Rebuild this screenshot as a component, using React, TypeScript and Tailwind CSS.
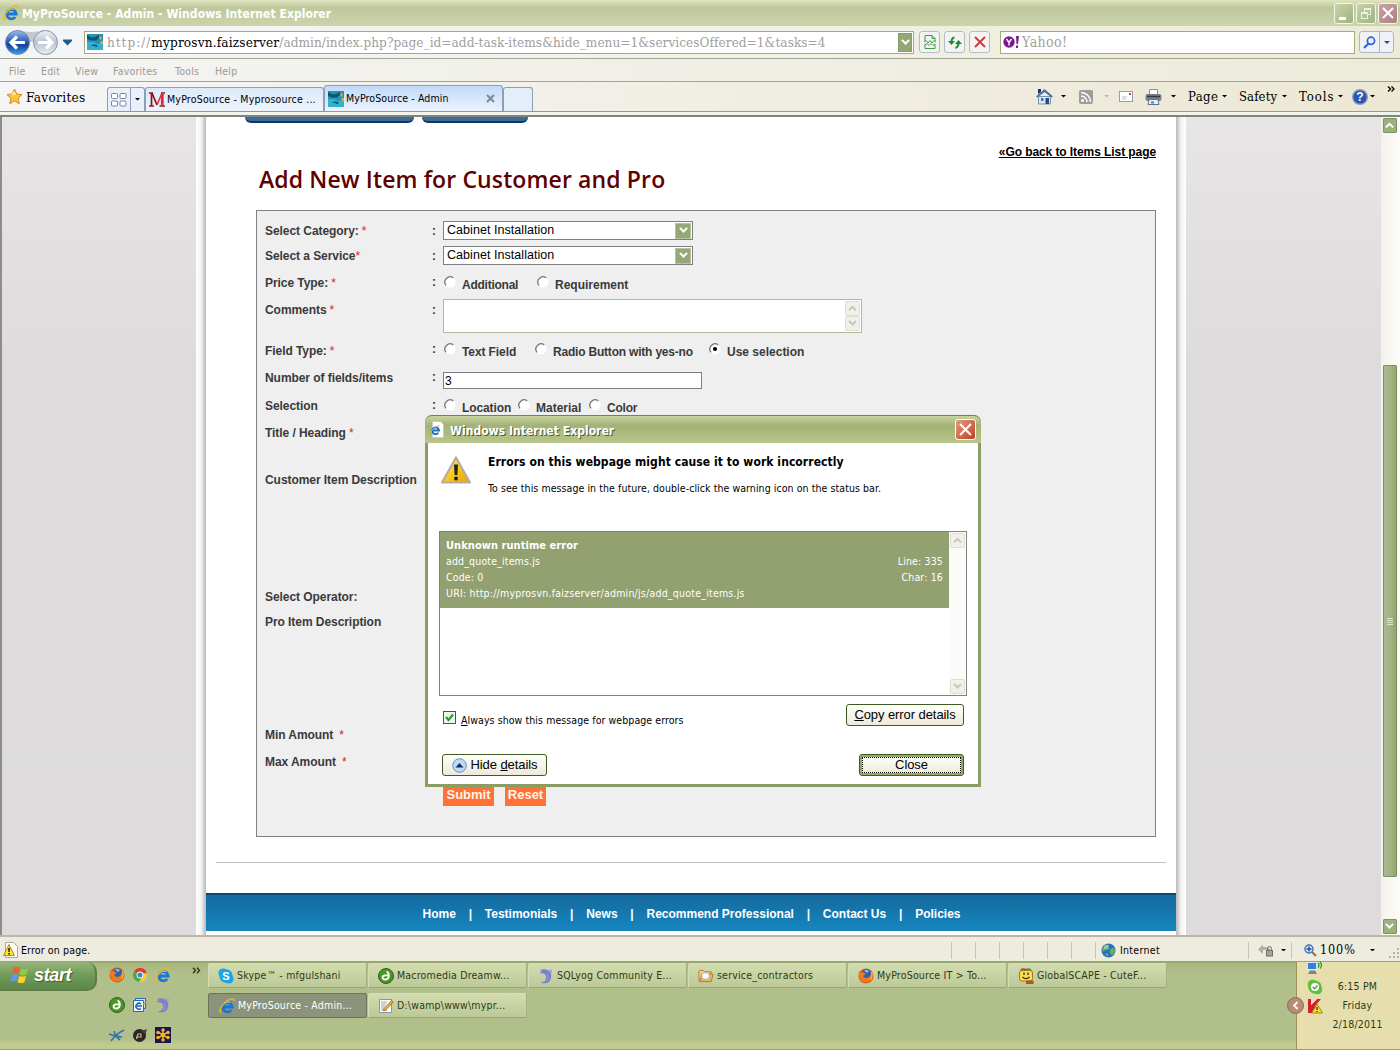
import React from "react";

const TAHOMA = "font-['DejaVu_Sans_Condensed','DejaVu_Sans',sans-serif]";
const SLAB = "font-['DejaVu_Serif_Condensed','DejaVu_Serif',serif]";
const ARIAL = "font-['Liberation_Sans',Arial,sans-serif]";
const TREB = "font-['Open_Sans','Noto_Sans',sans-serif]";

type P = { className?: string; size?: number };

/* ---------- icons ---------- */

function IE({ className = "", size = 16 }: P) {
  return (
    <svg className={`shrink-0 ${className}`} width={size} height={size} viewBox="0 0 16 16" fill="none">
      <path d="M4.500 9H13.200A4.700 4.700 0 1 0 12.300 12" stroke="#1a78cf" strokeWidth="2.800" />
      <path d="M5 6.200a4.600 4.600 0 0 1 6-1.600" stroke="#8fd0fa" strokeWidth="1.100" />
      <path d="M1.800 15.300C-.6 12.500 3.500 5 9 2.200c3.500-1.900 6.300-1.800 6 .8" stroke="#f0b322" strokeWidth="1.500" />
    </svg>
  );
}
function PageIE({ className = "" }: P) {
  return (
    <svg className={`shrink-0 ${className}`} width="15" height="17" viewBox="0 0 15 17" fill="none">
      <path d="M2.500.5h8l3 3v13h-11z" fill="#fff" stroke="#c3ccd6" />
      <path d="M3 9.500h6A3.400 3.400 0 1 0 8.400 11.800" stroke="#1c72c9" strokeWidth="2" />
      <path d="M.8 14C0 10.500 5 4.800 9.500 4.800" stroke="#e6b13a" />
    </svg>
  );
}
function SiteIcon({ className = "" }: P) {
  return (
    <svg className={`shrink-0 ${className}`} width="16" height="16" viewBox="0 0 16 16">
      <rect width="16" height="16" fill="#2292b8" />
      <path d="M0 1l4 2.500 4-.5 4-2v3L9 6.500H4L0 5z" fill="#12536f" />
      <path d="M0 8h7l3 2 6-1v7H0z" fill="#34b0d0" />
      <path d="M4 12c3-2.500 6-1.500 7 .5l-2 .5c-2-1.500-3-1-5-1z" fill="#0d5876" />
      <path d="M12 2.500h2.500V5L13 6zM13.500 7H16v3h-2.500z" fill="#f0a03c" />
    </svg>
  );
}
function Firefox({ className = "" }: P) {
  return (
    <svg className={`shrink-0 ${className}`} width="16" height="16" viewBox="0 0 16 16" fill="none">
      <circle cx="8" cy="8" r="7.500" fill="#d9541a" />
      <circle cx="8.500" cy="6.500" r="5" fill="#2b5fb0" />
      <path d="M6 2.500c2-1 4-.5 5 1L9 5z" fill="#8fc1ec" />
      <path d="M1 2.500l2 1.500 3 .5 1.500 2L5 8c1 2 4 2.500 6 1 1.500-1 2-3 2-5 2 3 1.500 7-.5 9-3 2.500-8 2-10-1C.8 9 .5 5 1 2.500z" fill="#ee7a1d" />
      <path d="M13.500 4c1.200 3 .5 6-1 8" stroke="#ffd24a" />
    </svg>
  );
}
function Chrome({ className = "" }: P) {
  return (
    <svg className={`shrink-0 ${className}`} width="16" height="16" viewBox="0 0 16 16">
      <circle cx="8" cy="8" r="7" fill="#f7cd38" />
      <path d="M8 8L1.900 4.500A7 7 0 0 1 14.800 6.200L8 6z" fill="#dd3b2b" />
      <path d="M8 8L1.900 4.500A7 7 0 0 0 7 15l3-5z" fill="#49a84b" />
      <circle cx="8" cy="8" r="3.400" fill="#f4f8fb" />
      <circle cx="8" cy="8" r="2.500" fill="#3f83c9" />
    </svg>
  );
}
function Dreamweaver({ className = "" }: P) {
  return (
    <svg className={`shrink-0 ${className}`} width="16" height="16" viewBox="0 0 16 16" fill="none">
      <circle cx="8" cy="8" r="7.500" fill="#4b9426" stroke="#2c6314" />
      <path d="M8.500 3.500c3 1 3.500 7.500-1 8-3.500.3-4-3.500-1-4 1.500-.2 2.500 0 4 0" stroke="#fff" strokeWidth="1.800" />
    </svg>
  );
}
function Outlook({ className = "" }: P) {
  return (
    <svg className={`shrink-0 ${className}`} width="16" height="16" viewBox="0 0 16 16" fill="none">
      <path d="M3.500 1.500h10v10h-10z" fill="#cfe0f7" stroke="#2a67b5" />
      <path d="M1.500 3.500h10v11h-10z" fill="#f2f7fe" stroke="#2a67b5" />
      <path d="M9 7a3 3 0 1 0 0 4.500M5 9h5" stroke="#2260b8" strokeWidth="1.500" />
      <path d="M11 7.500l4-3.500" stroke="#d9902a" strokeWidth="1.500" />
    </svg>
  );
}
function Dolphin({ className = "" }: P) {
  return (
    <svg className={`shrink-0 ${className}`} width="16" height="16" viewBox="0 0 16 16">
      <path d="M2 2c4-1.500 8-1 10 2 2.500 4 1 8.500-2 10.500-2 1-4 1-7 .5 1-1 2-1.500 3.500-1.500C8 12 8.500 9 7.500 7 6.500 5.500 4 5 1.500 4.500L4 3z" fill="#7c7fcb" />
      <path d="M10 3l4-1.500-1 5z" fill="#9496da" />
      <path d="M9 6c1.500 3 1 6-1 7.500 2.500-1 3-5 1-7.500z" fill="#c9caf2" />
    </svg>
  );
}
function Skype({ className = "" }: P) {
  return (
    <svg className={`shrink-0 ${className}`} width="16" height="16" viewBox="0 0 16 16">
      <circle cx="5" cy="5" r="4.600" fill="#1ba5e6" />
      <circle cx="11" cy="11" r="4.600" fill="#1ba5e6" />
      <circle cx="8" cy="8" r="6.700" fill="#1ba5e6" />
      <text x="8" y="12" fontSize="11" fontWeight="bold" fontFamily="Liberation Sans" fill="#fff" textAnchor="middle">S</text>
    </svg>
  );
}
function Folder({ className = "" }: P) {
  return (
    <svg className={`shrink-0 ${className}`} width="16" height="16" viewBox="0 0 17 16">
      <path d="M1 3l1-1h4l1.500 1.500H14V13H1z" fill="#f4d37a" stroke="#b8762a" />
      <path d="M4 6h12l-2 8H2z" fill="#f0b55a" stroke="#b8762a" />
      <rect x="4" y="4.500" width="8" height="7" rx="2.500" fill="#f2f8fb" stroke="#9fb0bd" />
    </svg>
  );
}
function Smiley({ className = "" }: P) {
  return (
    <svg className={`shrink-0 ${className}`} width="16" height="16" viewBox="0 0 16 16" fill="none">
      <path d="M3 2.500C3.500.5 6.500.5 8 2" stroke="#c33a22" strokeWidth="1.600" />
      <path d="M8 2c1.500-1.500 4-1.500 5 .5" stroke="#2f9a3a" strokeWidth="1.600" />
      <rect x="1.500" y="2.500" width="13" height="10.500" rx="2.500" fill="#f9e14a" stroke="#a8741a" />
      <path d="M6 4.500v2.500M10 4.500v2.500M4.500 9c2 2 5 2 7 0" stroke="#3b2a08" strokeWidth="1.300" />
      <path d="M8 12.500h7.500V16H8z" fill="#a35a2c" />
    </svg>
  );
}
function Note({ className = "" }: P) {
  return (
    <svg className={`shrink-0 ${className}`} width="16" height="16" viewBox="0 0 16 16" fill="none">
      <path d="M1.500 1.500h12v13h-12z" fill="#fff" stroke="#8b959f" />
      <path d="M3 4h6M3 6h5M3 8h4M3 10h3M3 12h6" stroke="#9aa5ae" />
      <path d="M6 10.500l7.500-8 1.800 1.500-7.500 8-2.300.8z" fill="#f1b13a" stroke="#7d5a1c" strokeWidth=".7" />
    </svg>
  );
}
function Star() {
  return (
    <svg width="17" height="17" viewBox="0 0 17 17">
      <path d="M8.500 1l2.300 5 5.200.6-3.900 3.600 1.200 5.500-4.800-2.800-4.800 2.800 1.200-5.500L1 6.600 6.200 6z" fill="#fcc63a" stroke="#d8891a" />
      <path d="M8.500 3l1.300 4H5z" fill="#ffe9a0" />
    </svg>
  );
}
function Flag() {
  return (
    <svg width="19" height="18" viewBox="0 0 17 16" className="shrink-0">
      <path d="M3.500 1.500C5.500.3 7 .5 8.800 1.500L7.500 7.100C5.800 6.100 4 6.100 2 7.100z" fill="#f0602c" />
      <path d="M9.800 2c2 1 4 1 6.400 0L14.700 7.600c-2.200 1-4.200 1-6.200 0z" fill="#8ccb45" />
      <path d="M1.700 8.100c2-1 3.800-1 5.500 0L5.800 13.800c-1.800-1-3.500-1-5.500 0z" fill="#5a9cf0" />
      <path d="M8.200 8.600c2 1 4 1 6.200 0L12.900 14.400c-2.100 1-4.100 1-6.100 0z" fill="#ffd02c" />
    </svg>
  );
}
function Warn({ size = 16, className = "" }: P) {
  return (
    <svg className={className} width={size} height={size} viewBox="0 0 32 32">
      <defs>
        <linearGradient id="wg" x1="0" y1="0" x2="1" y2="1">
          <stop offset="0" stopColor="#fff27a" />
          <stop offset=".5" stopColor="#f9cb1c" />
          <stop offset="1" stopColor="#ee9c10" />
        </linearGradient>
      </defs>
      <path d="M16 2.500L30 27.500H2z" fill="url(#wg)" stroke="#b3aea0" strokeWidth="2.200" strokeLinejoin="round" />
      <path d="M14 9.500h4l-.6 10.500h-2.800z" fill="#222" />
      <circle cx="16" cy="23.500" r="2" fill="#222" />
    </svg>
  );
}
function PageWarn() {
  return (
    <svg width="15" height="16" viewBox="0 0 15 16">
      <path d="M2.500.5h8l4 4v11h-12z" fill="#fff" stroke="#a9a9a0" />
      <path d="M6 2.500l5.500 11H.6z" fill="#ffe52a" stroke="#8a7a10" strokeWidth=".8" />
      <path d="M5.300 6h1.500l-.2 4h-1.100zM5.300 11h1.500v1.400H5.300z" fill="#000" />
    </svg>
  );
}
function Globe() {
  return (
    <svg width="15" height="15" viewBox="0 0 15 15">
      <circle cx="7.500" cy="7.500" r="7" fill="#2b6fc0" />
      <path d="M2 4c2-3 5-3 6-2l-1 3-3 1-1 3-2-2zM9 6l4-1 1 3-2 4-3-1zM4 11l3-1 0 4z" fill="#5fb653" />
      <circle cx="5.500" cy="4.500" r="2.500" fill="#fff" opacity=".35" />
    </svg>
  );
}
function Down({ color = "#000", w = 6 }: { color?: string; w?: number }) {
  return (
    <svg width={w} height={w / 2} viewBox="0 0 6 3" className="shrink-0">
      <path d="M0 0h6L3 3z" fill={color} />
    </svg>
  );
}
function Chev({ up = false, color = "#fff", w = 9 }: { up?: boolean; color?: string; w?: number }) {
  return (
    <svg width={w} height={w * 0.7} viewBox="0 0 10 7" fill="none">
      <path d={up ? "M1 6l4-4 4 4" : "M1 1l4 4 4-4"} stroke={color} strokeWidth="2.200" />
    </svg>
  );
}
function Magnifier({ plus = false }: { plus?: boolean }) {
  return plus ? (
    <svg width="13" height="13" viewBox="0 0 13 13" fill="none">
      <circle cx="5" cy="5" r="4" fill="#d5e6fa" stroke="#3b6fb8" strokeWidth="1.400" />
      <path d="M5 2.500v5M2.500 5h5" stroke="#1f4fa8" strokeWidth="1.400" />
      <path d="M8 8l4 4" stroke="#a66a42" strokeWidth="2" />
    </svg>
  ) : (
    <svg width="13" height="13" viewBox="0 0 13 13" fill="none">
      <circle cx="8" cy="4.800" r="3.600" stroke="#2c62dd" strokeWidth="1.700" />
      <path d="M5.500 7.500L1 12" stroke="#2c62dd" strokeWidth="2.200" />
    </svg>
  );
}

/* ---------- browser chrome ---------- */

function TitleBar() {
  return (
    <div className="flex h-[26px] shrink-0 items-center bg-gradient-to-b from-[#e0e4c0] via-[#bfc89b] via-30% to-[#ccd4ae] pl-[3px] pr-[2px]">
      <IE />
      <span className={`${TAHOMA} ml-[3px] mt-[2px] whitespace-nowrap text-[12px] font-bold tracking-[0.06px] text-white`}>
        MyProSource - Admin - Windows Internet Explorer
      </span>
      <div className="ml-auto flex gap-[2px]">
        <div className="relative h-[21px] w-[20px] rounded-[3px] border border-[#f4f6e8] bg-gradient-to-br from-[#c7d3a8] to-[#9fb484]">
          <i className="absolute bottom-[3px] left-[4px] h-[3px] w-[7px] bg-white" />
        </div>
        <div className="relative h-[21px] w-[20px] rounded-[3px] border border-[#f4f6e8] bg-gradient-to-br from-[#c7d3a8] to-[#9fb484]">
          <i className="absolute left-[7px] top-[4px] h-[7px] w-[7px] border border-t-2 border-[#eef3e0]" />
          <i className="absolute left-[4px] top-[8px] h-[7px] w-[7px] border border-t-2 border-[#eef3e0] bg-[#b3c398]" />
        </div>
        <div className="flex h-[21px] w-[20px] items-center justify-center rounded-[3px] border border-[#f4f6e8] bg-gradient-to-br from-[#c9a3a0] to-[#ad7f84]">
          <svg width="12" height="12" viewBox="0 0 12 12"><path d="M1 1l10 10M11 1L1 11" stroke="#fff" strokeWidth="2" /></svg>
        </div>
      </div>
    </div>
  );
}

const squareBtn = "flex h-[22px] w-[21px] items-center justify-center rounded-[3px] border border-[#b9b9cc] bg-[#f3f4f1]";

function AddressBar() {
  return (
    <div className="flex h-[32px] shrink-0 items-center bg-gradient-to-r from-[#f4f5f7] via-[#f1f2e6] to-[#edebd8]">
      <svg width="60" height="28" viewBox="0 0 60 28" className="ml-[3px] shrink-0">
        <defs>
          <linearGradient id="bk" x1="0" y1="0" x2="0" y2="1">
            <stop offset="0" stopColor="#9cbbe8" />
            <stop offset=".45" stopColor="#2b5fb9" />
            <stop offset=".6" stopColor="#11419c" />
            <stop offset="1" stopColor="#3fa0ea" />
          </linearGradient>
          <linearGradient id="fw" x1="0" y1="0" x2="0" y2="1">
            <stop offset="0" stopColor="#eef0f4" />
            <stop offset=".5" stopColor="#b9c3d3" />
            <stop offset="1" stopColor="#e9eef5" />
          </linearGradient>
        </defs>
        <path d="M14 2Q28 6 42 2L42 14H14z" fill="#c3c8d1" />
        <circle cx="14.500" cy="14.500" r="12" fill="url(#bk)" stroke="#7c8aa5" />
        <circle cx="42.500" cy="14.500" r="12" fill="url(#fw)" stroke="#8b94a5" />
        <path d="M22 14.500H9M14 8.500l-6 6 6 6" stroke="#fff" strokeWidth="3.200" fill="none" />
        <path d="M35 14.500h13M43 8.500l6 6-6 6" stroke="#fff" strokeWidth="3.200" fill="none" />
      </svg>
      <svg width="9" height="7" viewBox="0 0 9 7" className="shrink-0"><path d="M0 .5h9v1.500L4.500 6.500 0 2z" fill="#1f5c96" /></svg>
      <div className="ml-[12px] flex h-[23px] w-[830px] shrink-0 items-center border border-[#a2ad7e] bg-white pl-[2px] pr-[1px]">
        <SiteIcon />
        <span className={`${SLAB} ml-[4px] whitespace-nowrap text-[13.5px] tracking-[0.03px] text-[#a0a0a0]`}>
          <span className="tracking-[0.95px]">http://</span><span className="tracking-[0.15px] text-black">myprosvn.faizserver</span>/admin/index.php?page_id=add-task-items&amp;hide_menu=1&amp;servicesOffered=1&amp;tasks=4
        </span>
        <div className="ml-auto flex h-[19px] w-[14px] items-center justify-center border border-[#8b9d6c] bg-[#94a874]"><Chev /></div>
      </div>
      <div className="ml-[5px] flex shrink-0 gap-[4px]">
        <div className={squareBtn}>
          <svg width="12" height="14" viewBox="0 0 12 14" fill="none" stroke="#3f9a4a"><path d="M1 6V.5h7l3 3V6M1 9v4.500h10V9M8 .5v3h3" /><path d="M0 7l2-1.500 2 2.500 2-2.500 2 2.500 2-2.500L12 7M1 10l2-1.500 2 2 2-2 2 2 2-1.500" /></svg>
        </div>
        <div className={squareBtn}>
          <svg width="14" height="13" viewBox="0 0 14 13" fill="none" stroke="#23873a" strokeWidth="2"><path d="M6.500 1.500Q3.500 2 3.500 6" /><path d="M0 5h7L3.500 9z" fill="#23873a" stroke="none" /><path d="M7.500 12Q10.500 11 10.500 7" /><path d="M7 8h7l-3.500-4z" fill="#23873a" stroke="none" /></svg>
        </div>
        <div className={squareBtn}>
          <svg width="12" height="12" viewBox="0 0 12 12"><path d="M1 1l10 10M11 1L1 11" stroke="#d33a3f" strokeWidth="2" /></svg>
        </div>
      </div>
      <div className="ml-[10px] flex h-[23px] w-[355px] shrink-0 items-center border border-[#a2ad7e] bg-white pl-[2px]">
        <svg width="17" height="14" viewBox="0 0 17 14"><circle cx="6" cy="7" r="5.700" fill="#7b1a8c" /><path d="M3.500 4L6 7.500 8.500 4M6 7v3.500" stroke="#fff" strokeWidth="1.400" fill="none" /><path d="M13 1h3l-1 8h-1.500zM13 10.500h2V13h-2z" fill="#7b1a8c" /></svg>
        <span className={`${SLAB} ml-[2px] text-[14px] tracking-[0.4px] text-[#a0a0a0]`}>Yahoo!</span>
      </div>
      <div className="ml-[4px] flex h-[22px] w-[35px] shrink-0 rounded-[3px] border border-[#b0b4d0] bg-[#f0f1f4]">
        <div className="flex flex-1 items-center justify-center border-r border-[#b0b4d0]"><Magnifier /></div>
        <div className="flex w-[13px] items-center justify-center"><Down color="#1f4fa8" /></div>
      </div>
    </div>
  );
}

function MenuBar() {
  return (
    <div className={`${TAHOMA} flex h-[24px] shrink-0 items-center border-y border-[#a3a394] bg-gradient-to-r from-[#f4f4f4] to-[#edebd9] pt-[3px] text-[10.5px] tracking-[0.2px] text-[#9b9b92]`}>
      <span className="ml-[9px] w-[32px]">File</span>
      <span className="w-[34px]">Edit</span>
      <span className="w-[38px]">View</span>
      <span className="w-[62px]">Favorites</span>
      <span className="w-[40px]">Tools</span>
      <span>Help</span>
    </div>
  );
}

function CommandBar() {
  return (
    <div className="flex h-[30px] shrink-0 items-end border-b border-[#8f9a9f] bg-gradient-to-r from-[#f5f5f6] to-[#ece8d4]">
      <div className="flex h-[29px] w-[107px] shrink-0 items-center pl-[6px]">
        <Star />
        <span className={`${SLAB} ml-[3px] mt-px text-[13.5px] tracking-[0.3px] text-black`}>Favorites</span>
      </div>
      <div className="flex h-[24px] w-[38px] shrink-0 rounded-t-[3px] border border-b-0 border-[#8e9fb5] bg-[#e9f0fb]">
        <div className="flex w-[23px] items-center justify-center border-r border-[#8e9fb5]">
          <svg width="16" height="14" viewBox="0 0 16 14" fill="#fff" stroke="#7785a0"><rect x=".5" y=".5" width="6" height="5" rx="1" /><rect x="9" y=".5" width="6" height="5" rx="1" /><rect x=".5" y="8" width="6" height="5" rx="1" /><rect x="9" y="8" width="6" height="5" rx="1" /></svg>
        </div>
        <div className="flex flex-1 items-center justify-center"><Down w={5} /></div>
      </div>
      <div className={`${TAHOMA} flex h-[24px] w-[179px] shrink-0 items-center rounded-t-[3px] border border-b-0 border-[#8e9fb5] bg-gradient-to-b from-[#dde9fa] to-[#eef4fd] pl-[3px] text-[10.5px] tracking-[0.2px] text-black`}>
        <svg width="16" height="15" viewBox="0 0 16 15" fill="none"><path d="M0 1h4M0 14h5M12 1h4M10.500 14H16" stroke="#a3161c" strokeWidth="1.400" /><path d="M2.500 1v13M3 1l5 12" stroke="#8e1218" strokeWidth="1.700" /><path d="M8 13l5-12" stroke="#dd2d36" strokeWidth="1.500" /><path d="M13.300 1v13" stroke="#dd2d36" strokeWidth="2.800" /></svg>
        <span className="ml-[2px] mt-px whitespace-nowrap">MyProSource - Myprosource ...</span>
      </div>
      <div className={`${TAHOMA} flex h-[26px] w-[179px] shrink-0 items-center rounded-t-[3px] border border-b-0 border-[#8e9fb5] bg-gradient-to-b from-[#c0dafa] to-[#ecf3fd] pl-[3px] pr-[7px] text-[10.5px] tracking-[0.1px] text-black`}>
        <SiteIcon />
        <span className="ml-[2px] mt-px whitespace-nowrap">MyProSource - Admin</span>
        <svg className="ml-auto" width="9" height="9" viewBox="0 0 9 9"><path d="M1 1l7 7M8 1L1 8" stroke="#7f8792" strokeWidth="2" /></svg>
      </div>
      <div className="h-[24px] w-[30px] shrink-0 rounded-t-[3px] border border-b-0 border-[#8e9fb5] bg-[#e4edfa]" />
      <div className={`${SLAB} ml-auto flex h-[29px] items-center pr-[5px] text-[13px] text-black`}>
        <svg width="17" height="17" viewBox="0 0 17 17"><path d="M2.500 8.500h12V16h-12z" fill="#dbe8f2" stroke="#7d92a6" /><path d="M0 8.500L8.500 1 17 8.500l-1.500 1L8.500 4l-7 5.500z" fill="#4a6fa5" /><path d="M2 1h3v3L2 6z" fill="#1d2f80" /><path d="M5 10h2.500v3H5z" fill="#3a79c9" /><path d="M9.500 10H13v6H9.500z" fill="#1f4d85" /></svg>
        <span className="ml-[8px] mr-[13px]"><Down w={5} /></span>
        <svg width="14" height="14" viewBox="0 0 14 14"><rect width="14" height="14" rx="2" fill="#9d9d99" /><circle cx="3.500" cy="10.500" r="1.500" fill="#fff" /><path d="M2 6a6 6 0 0 1 6 6M2 2.500A9.500 9.500 0 0 1 11.500 12" stroke="#fff" strokeWidth="1.600" fill="none" /></svg>
        <span className="ml-[11px] mr-[10px]"><Down w={5} color="#b9b7ab" /></span>
        <svg width="14" height="11" viewBox="0 0 14 11"><rect x=".5" y=".5" width="13" height="10" fill="#fff" stroke="#9c9ca2" /><path d="M10 2h2v2h-2z" fill="#d33b35" /><path d="M3 6h5M3 8h4" stroke="#b8bfd0" /></svg>
        <svg className="ml-[12px]" width="17" height="16" viewBox="0 0 17 16"><path d="M4.500.5h8V6h-8z" fill="#fff" stroke="#8b8f98" /><rect x=".5" y="5" width="16" height="7" rx="2" fill="#78818e" /><path d="M2 7.500h13" stroke="#343b46" strokeWidth="1.500" /><path d="M4 10.500h9l1 5H3z" fill="#e9f2fb" stroke="#67707c" /><path d="M6 12.500h3v2H6z" fill="#2b8bd8" /></svg>
        <span className="ml-[9px] mr-[12px]"><Down w={5} /></span>
        <span className="mt-px w-[31px] tracking-[0.4px]">Page</span><span className="ml-[3px] mr-[12px]"><Down w={5} /></span>
        <span className="mt-px w-[39px] tracking-[0.1px]">Safety</span><span className="ml-[4px] mr-[12px]"><Down w={5} /></span>
        <span className="mt-px w-[37px] tracking-[1px]">Tools</span><span className="ml-[2px] mr-[9px]"><Down w={5} /></span>
        <svg width="16" height="16" viewBox="0 0 16 16"><circle cx="8" cy="8" r="7.300" fill="#2a57b3" stroke="#8a99b8" strokeWidth="1.400" /><text x="8" y="12.300" fontSize="12" fontWeight="bold" fontFamily="Liberation Sans" fill="#fff" textAnchor="middle">?</text></svg>
        <span className="ml-[2px] mr-[12px]"><Down w={5} /></span>
        <svg className="mb-[16px]" width="8" height="6" viewBox="0 0 8 6" fill="none" stroke="#000" strokeWidth="1.300"><path d="M1 .5L3.500 3 1 5.500M4.500.5L7 3 4.500 5.500" /></svg>
      </div>
    </div>
  );
}

/* ---------- web page ---------- */

function Radio({ on = false, className = "" }: { on?: boolean; className?: string }) {
  return (
    <svg className={`shrink-0 ${className}`} width="12" height="12" viewBox="0 0 12 12" fill="none">
      <circle cx="6" cy="6" r="5.500" fill="#fff" />
      <path d="M2 9.300A5.200 5.200 0 0 1 9.300 2" stroke="#77776f" strokeWidth="1.300" />
      {on && <circle cx="6" cy="6" r="2.100" fill="#000" />}
    </svg>
  );
}

function Row({ label, star, h, colon = "", children }: { label: string; star?: string; h: string; colon?: string; children?: React.ReactNode }) {
  return (
    <div className={`flex items-start whitespace-nowrap ${h}`}>
      <div className="w-[167px] shrink-0 leading-5 tracking-[-0.06px]">
        {label}
        {star && <span className={`font-normal text-[#e02020] ${star}`}>*</span>}
      </div>
      <div className={`w-[11px] shrink-0 leading-5 ${colon}`}>:</div>
      {children}
    </div>
  );
}

function Select() {
  return (
    <div className="flex h-[19px] w-[250px] items-center justify-between border border-[#7f7f7f] bg-white pl-[3px] pr-px text-[12.5px] font-normal tracking-[0.05px] text-black">
      Cabinet Installation
      <div className="flex h-[16px] w-[16px] items-center justify-center border border-[#b6c49c] bg-[#96a877]"><Chev /></div>
    </div>
  );
}

function DisabledArrow({ up = false }: { up?: boolean }) {
  return (
    <div className="flex h-[15px] w-[15px] items-center justify-center rounded-[2px] border border-[#dedfd3] bg-[#f1f1ea]"><Chev up={up} color="#c5c6ba" /></div>
  );
}

function Form() {
  return (
    <div className={`${ARIAL} h-[627px] w-[900px] border border-[#808080] bg-[#efefef] pl-[8px] pt-[10px] text-[12px] font-bold text-[#3a3a3a]`}>
      <Row label="Select Category:" star="ml-[3px]" h="h-[25px]"><Select /></Row>
      <Row label="Select a Service" star="ml-0" h="h-[27px]"><Select /></Row>
      <Row label="Price Type:" star="ml-[3px]" h="h-[27px]" colon="-mt-px">
        <Radio className="ml-px mt-[3px]" /><span className="ml-[6px] mt-[2px] w-[56px] leading-5 tracking-[-0.25px]">Additional</span>
        <Radio className="ml-[19px] mt-[3px]" /><span className="ml-[6px] mt-[2px] leading-5">Requirement</span>
      </Row>
      <Row label="Comments" star="ml-[3px]" h="h-[41px]">
        <div className="-mt-px flex h-[34px] w-[419px] flex-col items-end justify-between border border-[#b4bb92] bg-white p-px"><DisabledArrow up /><DisabledArrow /></div>
      </Row>
      <Row label="Field Type:" star="ml-[3px]" h="h-[27px]" colon="-mt-[2px]">
        <Radio className="ml-px mt-[2px]" /><span className="ml-[6px] mt-px w-[54px] leading-5 tracking-[-0.1px]">Text Field</span>
        <Radio className="ml-[19px] mt-[2px]" /><span className="ml-[6px] mt-px w-[140px] leading-5 tracking-[-0.2px]">Radio Button with yes-no</span>
        <Radio on className="ml-[16px] mt-[2px]" /><span className="ml-[6px] mt-px leading-5">Use selection</span>
      </Row>
      <Row label="Number of fields/items" h="h-[28px]" colon="-mt-px">
        <div className="mt-[4px] h-[17px] w-[259px] border border-[#7f7f7f] bg-white pl-px text-[12px] font-normal leading-[16px] text-black">3</div>
      </Row>
      <Row label="Selection" h="h-[27px]" colon="-mt-px">
        <Radio className="ml-px mt-[3px]" /><span className="ml-[6px] mt-[2px] w-[49px] leading-5 tracking-[-0.1px]">Location</span>
        <Radio className="ml-[7px] mt-[3px]" /><span className="ml-[6px] mt-[2px] w-[46px] leading-5">Material</span>
        <Radio className="ml-[7px] mt-[3px]" /><span className="ml-[6px] mt-[2px] leading-5 tracking-[-0.2px]">Color</span>
      </Row>
      <Row label="Title / Heading" star="ml-[3px]" h="h-[47px]" />
      <Row label="Customer Item Description" h="h-[117px]" />
      <Row label="Select Operator:" h="h-[25px]" />
      <Row label="Pro Item Description" h="h-[113px]" />
      <Row label="Min Amount" star="ml-[6px]" h="h-[27px]" />
      <Row label="Max Amount" star="ml-[6px]" h="h-[32px]" />
      <div className="ml-[178px] flex gap-[11px] text-[13px] leading-[22px] text-[#fff3e8]">
        <div className="h-[22px] w-[51px] bg-[#fe7236] text-center">Submit</div>
        <div className="h-[22px] w-[41px] bg-[#fe7236] text-center">Reset</div>
      </div>
    </div>
  );
}

const NAV = ["Home", "Testimonials", "News", "Recommend Professional", "Contact Us", "Policies"];

function WebPage() {
  return (
    <div className={`${ARIAL} flex h-[818px] w-[970px] shrink-0 flex-col bg-white`}>
      <div className="flex h-[6px] gap-[8px] pl-[39px]">
        <div className="w-[169px] rounded-b-[6px] border-b-2 border-[#15335f] bg-[#3c6d99]" />
        <div className="w-[106px] rounded-b-[6px] border-b-2 border-[#15335f] bg-[#3c6d99]" />
      </div>
      <div className="mt-[20px] h-[18px] pr-[20px] text-right text-[12px] font-bold leading-[18px] tracking-[-0.08px] text-black underline">«Go back to Items List page</div>
      <h1 className={`${TREB} mt-px h-[48px] whitespace-nowrap pl-[53px] text-[23px] font-semibold leading-[34px] tracking-[0.12px] text-[#5f0000]`}>Add New Item for Customer and Pro</h1>
      <div className="pl-[50px]"><Form /></div>
      <div className="mx-[10px] mt-[25px] h-px shrink-0 bg-[#c0c0c0]" />
      <div className="mt-[30px] flex h-[38px] items-center justify-center gap-[12.8px] border-t-2 border-[#0b4a70] bg-gradient-to-b from-[#146a9e] to-[#1686bf] pl-px pt-[2px] text-[12px] font-bold text-white">
        {NAV.map((n, i) => (
          <React.Fragment key={n}>
            {i > 0 && <span>|</span>}
            <span>{n}</span>
          </React.Fragment>
        ))}
      </div>
    </div>
  );
}

function GreenArrow({ up = false }: { up?: boolean }) {
  return <div className="flex h-[15px] w-[14px] shrink-0 items-center justify-center rounded-[1px] border border-[#7f9364] bg-[#9cb07c]"><Chev up={up} /></div>;
}

function Viewport() {
  return (
    <div className="flex h-[818px] shrink-0 border-l-2 border-[#8d8d86]">
      <div className="w-[194px] shrink-0 bg-gradient-to-b from-[#e7e5e6] to-[#dddbdc] to-30%" />
      <div className="w-[10px] shrink-0 bg-gradient-to-r from-white via-[#f4f4f4] to-[#b9b9b9]" />
      <WebPage />
      <div className="w-[10px] shrink-0 bg-gradient-to-r from-[#b9b9b9] via-[#f4f4f4] to-white" />
      <div className="w-[195px] shrink-0 bg-gradient-to-b from-[#e7e5e6] to-[#dddbdc] to-30%" />
      <div className="flex w-[19px] shrink-0 flex-col items-center bg-gradient-to-r from-[#f3f2ea] to-[#fdfdfb] pr-[2px]">
        <div className="mt-px"><GreenArrow up /></div>
        <div className="mt-[232px] flex h-[512px] w-[14px] flex-col items-center justify-center gap-px rounded-[1px] border border-[#7d9160] bg-gradient-to-r from-[#a9b892] via-[#a2b583] to-[#8fa66d]">
          <i className="h-px w-[6px] bg-[#dfe8cc]" /><i className="h-px w-[6px] bg-[#dfe8cc]" /><i className="h-px w-[6px] bg-[#dfe8cc]" /><i className="h-px w-[6px] bg-[#dfe8cc]" />
        </div>
        <div className="mb-[1px] mt-auto"><GreenArrow /></div>
      </div>
    </div>
  );
}

/* ---------- error dialog ---------- */

const dlgBtn = "flex items-center justify-center rounded-[3px] border border-[#3f5a22] bg-gradient-to-b from-[#fffffa] to-[#edeadb] text-[13px] tracking-[-0.08px] text-black";

function Dialog() {
  return (
    <div className={`${TAHOMA} absolute left-[425px] top-[415px] flex h-[372px] w-[556px] flex-col rounded-t-[8px] border-x-[3px] border-b-[3px] border-[#8a9d63] bg-white text-[10.5px] text-black`}>
      <div className="-mx-[3px] flex h-[28px] shrink-0 items-center rounded-t-[7px] border-t border-[#6f8450] bg-gradient-to-b from-[#c9d3a0] via-[#a3b277] via-35% to-[#b9c68b] pl-[5px] pr-[5px]">
        <PageIE />
        <span className="ml-[5px] mt-[2px] text-[12px] font-bold tracking-[0.04px] text-white [text-shadow:1px_1px_0_#4d5c30]">Windows Internet Explorer</span>
        <div className="ml-auto flex h-[21px] w-[21px] items-center justify-center rounded-[3px] border border-white bg-gradient-to-br from-[#e39a7c] to-[#c23a20]">
          <svg width="13" height="13" viewBox="0 0 12 12"><path d="M1 1l10 10M11 1L1 11" stroke="#fff" strokeWidth="1.900" /></svg>
        </div>
      </div>
      <div className="flex h-[88px] shrink-0">
        <Warn size={32} className="ml-[12px] mt-[12px]" />
        <div className="ml-[16px]">
          <div className="mt-[10px] whitespace-nowrap text-[12px] font-bold leading-[18px] tracking-[0.07px]">Errors on this webpage might cause it to work incorrectly</div>
          <div className="mt-[9px] whitespace-nowrap leading-[16px] tracking-[0.07px]">To see this message in the future, double-click the warning icon on the status bar.</div>
        </div>
      </div>
      <div className="ml-[11px] flex h-[165px] w-[528px] shrink-0 border border-[#83837c]">
        <div className="flex-1">
          <div className="flex h-[76px] justify-between bg-[#93a070] px-[6px] pt-[6px] leading-[16px] text-white">
            <div className="whitespace-nowrap">
              <div className="h-[15px] text-[11px] font-bold tracking-[0.05px]">Unknown runtime error</div>
              <div className="tracking-[0.15px]">add_quote_items.js</div>
              <div className="tracking-[0.15px]">Code: 0</div>
              <div className="tracking-[0.22px]">URI: http://myprosvn.faizserver/admin/js/add_quote_items.js</div>
            </div>
            <div className="pt-[15px] text-right tracking-[0.15px]"><div>Line: 335</div><div>Char: 16</div></div>
          </div>
        </div>
        <div className="flex w-[17px] flex-col items-center justify-between bg-[#fbfbf9] py-px"><DisabledArrow up /><DisabledArrow /></div>
      </div>
      <div className="flex h-[58px] shrink-0 items-start justify-between pl-[15px] pr-[14px]">
        <div className="mt-[15px] flex">
          <div className="flex h-[13px] w-[13px] items-center justify-center border border-[#2f5a7c] bg-[#f1f4ee]">
            <svg width="9" height="9" viewBox="0 0 9 9"><path d="M1 4l2.500 3L8 1.500" stroke="#29a02b" strokeWidth="2.200" fill="none" /></svg>
          </div>
          <span className="ml-[5px] mt-px leading-[16px] tracking-[0.08px]"><u>A</u>lways show this message for webpage errors</span>
        </div>
        <div className={`${dlgBtn} ${ARIAL} mt-[8px] h-[22px] w-[118px]`}><span><u>C</u>opy error details</span></div>
      </div>
      <div className="flex items-start justify-between pl-[14px] pr-[14px]">
        <div className={`${dlgBtn} ${ARIAL} h-[22px] w-[105px]`}>
          <svg width="15" height="15" viewBox="0 0 15 15" className="mr-[4px]"><circle cx="7.500" cy="7.500" r="6.800" fill="#bcd9f5" stroke="#6b8fc0" /><path d="M3.500 9.500h8l-4-4.500z" fill="#122b6b" /></svg>
          <span>Hide <u>d</u>etails</span>
        </div>
        <div className={`${dlgBtn} ${ARIAL} h-[22px] w-[105px] p-[2px] shadow-[inset_0_0_0_2px_#93ab66]`}><span className="flex h-full w-full items-center justify-center border border-dotted border-black">Close</span></div>
      </div>
    </div>
  );
}

/* ---------- bottom bars ---------- */

function StatusBar() {
  return (
    <div className={`${TAHOMA} flex h-[26px] shrink-0 items-center border-t-2 border-[#b9b7a6] bg-[#eeebdf] pl-[3px] pt-[2px] text-[10.5px] tracking-[0.15px] text-black`}>
      <PageWarn />
      <span className="ml-[3px] mt-px">Error on page.</span>
      <div className="ml-auto flex h-[18px] items-center">
        {[0, 1, 2, 3, 4, 5].map((i) => <i key={i} className="h-[17px] w-[24px] border-l border-[#c8c5b4]" />)}
        <div className="flex h-[17px] w-[153px] items-center border-l border-[#c8c5b4] pl-[5px]"><Globe /><span className="ml-[4px] mt-px tracking-[0.3px]">Internet</span></div>
        <div className="flex h-[17px] w-[43px] items-center border-l border-[#c8c5b4] pl-[9px]">
          <svg width="16" height="14" viewBox="0 0 16 14" fill="none"><path d="M0 6.500L5 1.500V4c4-.5 7 .5 8 3.500-2-1-5-1-8-.5V11z" fill="#b0b0a9" /><rect x="8.500" y="7.500" width="6" height="5.500" fill="#a3a39d" stroke="#72726c" /><path d="M9.500 7V5.500a2 2 0 0 1 4 0V7" stroke="#72726c" /></svg>
          <span className="ml-[7px]"><Down w={5} /></span>
        </div>
        <div className="flex h-[17px] w-[109px] items-center border-l border-[#c8c5b4] pl-[12px]">
          <Magnifier plus /><span className={`${SLAB} ml-[3px] mt-px text-[12.5px] tracking-[0.9px]`}>100%</span><span className="ml-[14px]"><Down w={5} /></span>
          <svg className="ml-auto mt-[6px]" width="11" height="11" viewBox="0 0 11 11" fill="#b5b2a0"><path d="M8 0h2v2H8zM4 4h2v2H4zM8 4h2v2H8zM0 8h2v2H0zM4 8h2v2H4zM8 8h2v2H8z" /></svg>
        </div>
      </div>
    </div>
  );
}

const TASKS: [React.ReactNode, string][] = [
  [<Skype />, "Skype™ - mfgulshani"],
  [<Dreamweaver />, "Macromedia Dreamw..."],
  [<Dolphin />, "SQLyog Community E..."],
  [<Folder />, "service_contractors"],
  [<Firefox />, "MyProSource IT > To..."],
  [<Smiley />, "GlobalSCAPE - CuteF..."],
];

const taskBtn = "flex h-[25px] w-[159px] items-center gap-[3px] whitespace-nowrap rounded-[2px] border pl-[9px]";
const taskIdle = "border-[#d5deb4] border-b-[#96a76c] border-r-[#a3b37a] bg-gradient-to-b from-[#d3dcb0] to-[#bcc996]";

function TaskBar() {
  return (
    <div className={`${TAHOMA} flex h-[89px] shrink-0 border-b border-t-2 border-b-[#96a565] border-t-[#95a968] bg-[linear-gradient(to_bottom,#a7b67c,#b1bf8a_12%,#b1bf8a_88%,#c0cb8e_95%)] text-[10.5px] tracking-[0.2px] text-[#2f3a12]`}>
      <div className="-mt-px flex h-[29px] w-[97px] shrink-0 items-center rounded-r-[10px] border-b border-r-2 border-[#5f7a42] bg-gradient-to-b from-[#97b47b] via-[#6f9a58] to-[#5b8547] pb-[3px] pl-[10px]">
        <Flag />
        <span className={`${ARIAL} ml-[5px] text-[18px] font-bold italic leading-none tracking-[-0.02em] text-white [text-shadow:1px_1px_1px_#3d5a2c]`}>start</span>
      </div>
      <div className="ml-[12px] mt-[4px] grid h-[78px] w-[71px] shrink-0 grid-cols-[23px_23px_23px] grid-rows-[30px_30px_16px]">
        <Firefox /><Chrome /><IE />
        <Dreamweaver /><Outlook /><Dolphin />
        <svg width="16" height="16" viewBox="0 0 16 16" fill="none" stroke="#3171b0" strokeWidth="1.500"><path d="M2 14Q7 7 15 3M5 4q1 5 6 9M0 7q6 3 13 3" /></svg>
        <svg width="16" height="16" viewBox="0 0 16 16" fill="none"><circle cx="7.500" cy="8.500" r="6.500" fill="#2b2623" /><path d="M4 10h5V7H6l-1.500 5" stroke="#c9b89a" strokeWidth="1.200" /><path d="M9 4l6-2-1.500 5z" fill="#4a4038" /></svg>
        <svg width="16" height="16" viewBox="0 0 16 16"><rect width="16" height="16" fill="#17174d" /><path d="M8 3v10M3 5l10 6M13 5L3 11" stroke="#f2b12c" strokeWidth="1.500" /><g fill="#f2b12c"><circle cx="8" cy="8" r="2.200" /><circle cx="8" cy="3" r="1.800" /><circle cx="8" cy="13" r="1.800" /><circle cx="3" cy="5.500" r="1.800" /><circle cx="13" cy="5.500" r="1.800" /><circle cx="3" cy="10.500" r="1.800" /><circle cx="13" cy="10.500" r="1.800" /></g></svg>
      </div>
      <svg className="ml-[12px] mt-[4px] shrink-0" width="9" height="7" viewBox="0 0 9 7" fill="none" stroke="#2c3713" strokeWidth="1.400"><path d="M1 .8L3.500 3.500 1 6.200M5 .8l2.500 2.700L5 6.200" /></svg>
      <div className="ml-[7px] flex w-[980px] shrink-0 flex-col gap-[5px]">
        <div className="flex gap-[1px]">
          {TASKS.map(([icon, t]) => <div key={t} className={`${taskBtn} ${taskIdle}`}>{icon}{t}</div>)}
        </div>
        <div className="flex gap-[1px]">
          <div className={`${taskBtn} border-[#6b7555] bg-[#8b937a] text-white`}><IE className="ml-px" />MyProSource - Admin...</div>
          <div className={`${taskBtn} ${taskIdle}`}><Note />D:\wamp\www\mypr...</div>
        </div>
      </div>
      <div className="relative -mt-px ml-auto flex w-[104px] shrink-0 border-l border-[#a08f58] bg-[#e6deac]">
        <div className="absolute -left-[10px] top-[35px] flex h-[17px] w-[17px] items-center justify-center rounded-full border border-[#8c6a58] bg-[#b98a75]">
          <svg width="7" height="9" viewBox="0 0 7 9" fill="none"><path d="M5.500 1L2 4.500 5.500 8" stroke="#fff" strokeWidth="1.800" /></svg>
        </div>
        <div className="-mt-px ml-[10px] flex w-[17px] flex-col gap-[3px]">
          <svg width="16" height="15" viewBox="0 0 16 15" fill="none"><rect x=".5" y="1.500" width="9" height="7" fill="#2d83dd" stroke="#dfe6ef" /><path d="M1 13h9l-2-3.500H3z" fill="#7a8390" /><path d="M11 2q2 2 0 4.500M13 1q3 3 0 6.500" stroke="#23a030" strokeWidth="1.300" /></svg>
          <svg width="16" height="16" viewBox="0 0 16 16"><circle cx="5.500" cy="5.500" r="4.800" fill="#63bd3e" /><circle cx="10.500" cy="10.500" r="4.800" fill="#63bd3e" /><circle cx="8" cy="8" r="6.600" fill="#63bd3e" /><circle cx="8" cy="8" r="4" fill="#fff" /><path d="M5.800 8l1.700 1.700 3-3.200" stroke="#4aa329" strokeWidth="1.500" fill="none" /></svg>
          <svg width="16" height="16" viewBox="0 0 16 16"><path d="M1 1h3v6l6-6h4L8 8l5 7H1z" fill="#d2202c" /><path d="M4 1h6L4 7z" fill="#f0d5d2" /><path d="M10 6l5.500 9h-11z" fill="#f9d93a" stroke="#8a6b12" strokeWidth=".8" /><path d="M9.500 9h1v3h-1zM9.500 13h1v1h-1z" fill="#000" /></svg>
        </div>
        <div className="mt-[15px] flex-1 pl-[2px] pr-[11px] text-center leading-[19px]"><div>6:15 PM</div><div>Friday</div><div>2/18/2011</div></div>
      </div>
    </div>
  );
}

export default function App() {
  return (
    <div className="relative flex h-[1050px] w-[1400px] flex-col overflow-hidden bg-[#eeebdf]">
      <TitleBar />
      <AddressBar />
      <MenuBar />
      <CommandBar />
      <div className="h-[5px] shrink-0 border-b-2 border-[#83837c] bg-[#f3f3ee]" />
      <Viewport />
      <StatusBar />
      <TaskBar />
      <Dialog />
    </div>
  );
}
